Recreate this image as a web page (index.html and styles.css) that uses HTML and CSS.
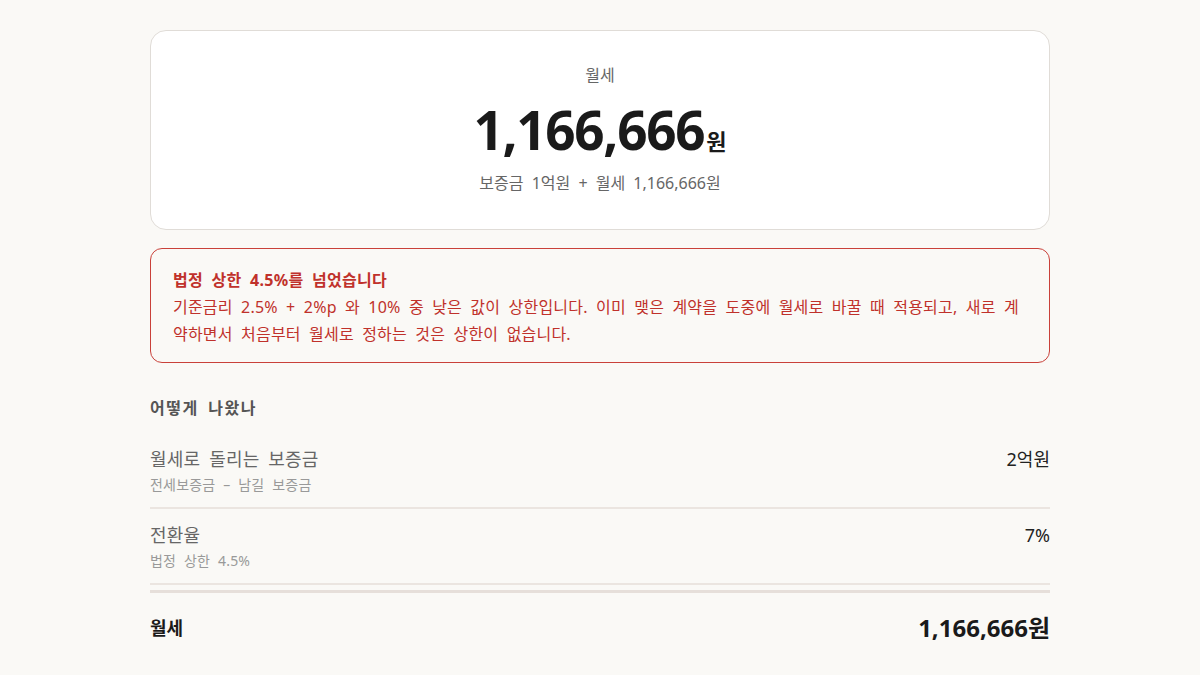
FILE: index.html
```html
<!DOCTYPE html>
<html lang="ko">
<head>
<meta charset="utf-8">
<link rel="stylesheet" href="styles.css">
</head>
<body>
<main class="wrap">
  <section class="result">
    <div class="result-label">월세</div>
    <div class="result-value"><span class="num">1,166,666</span><span class="unit">원</span></div>
    <div class="result-sub">보증금 1억원 + 월세 1,166,666원</div>
  </section>

  <section class="alert">
    <div class="alert-title">법정 상한 4.5%를 넘었습니다</div>
    <p class="alert-body">기준금리 2.5% + 2%p 와 10% 중 낮은 값이 상한입니다. 이미 맺은 계약을 도중에 월세로 바꿀 때 적용되고, 새로 계약하면서 처음부터 월세로 정하는 것은 상한이 없습니다.</p>
  </section>

  <section class="how">
    <h2 class="how-title">어떻게 나왔나</h2>
    <div class="row">
      <div class="row-left">
        <div class="row-label">월세로 돌리는 보증금</div>
        <div class="row-sub">전세보증금 – 남길 보증금</div>
      </div>
      <div class="row-value">2억원</div>
    </div>
    <div class="row">
      <div class="row-left">
        <div class="row-label">전환율</div>
        <div class="row-sub">법정 상한 4.5%</div>
      </div>
      <div class="row-value">7%</div>
    </div>
    <div class="total">
      <div class="total-label">월세</div>
      <div class="total-value">1,166,666원</div>
    </div>
  </section>
</main>
</body>
</html>
```

FILE: styles.css
```css
* { box-sizing: border-box; }
html, body { margin: 0; padding: 0; }
body {
  background: #faf9f6;
  font-family: "Noto Sans", "Noto Sans CJK KR", sans-serif;
  color: #222;
  word-spacing: 4px;
}
.wrap {
  width: 900px;
  margin: 0 auto;
  padding-top: 30px;
}
.result {
  background: #fff;
  border: 1px solid #e0dcd7;
  border-radius: 16px;
  height: 200px;
  padding-top: 32px;
  display: flex;
  flex-direction: column;
  align-items: center;
}
.result-label {
  font-size: 16px;
  line-height: 24px;
  color: #666;
}
.result-value {
  display: flex;
  align-items: baseline;
  justify-content: center;
  margin-top: 13px;
  height: 60px;
  color: #1a1a1a;
  font-weight: 700;
}
.result-value .num {
  font-size: 53px;
  line-height: 60px;
  letter-spacing: -1.3px;
}
.result-value .unit {
  font-size: 22px;
  line-height: 1;
  margin-left: 2px;
}
.result-sub {
  margin-top: 11px;
  font-size: 16px;
  line-height: 24px;
  color: #666;
}
.alert {
  margin-top: 18px;
  border: 1.5px solid #c9413a;
  border-radius: 12px;
  padding: 18px 22px 14px 22px;
  color: #c0312b;
}
.alert-title {
  font-size: 16px;
  font-weight: 700;
  line-height: 26px;
  letter-spacing: 0.3px;
}
.alert-body {
  margin: 1px 0 0 0;
  font-size: 16px;
  line-height: 27px;
  letter-spacing: 0.2px;
}
.how {
  margin-top: 32px;
}
.how-title {
  margin: 0;
  font-size: 16px;
  font-weight: 700;
  line-height: 26px;
  color: #555;
  letter-spacing: 1.5px;
}
.row {
  display: flex;
  justify-content: space-between;
  align-items: flex-start;
  padding: 13px 0 11px;
  border-bottom: 2px solid #ebe5e0;
}
.row:first-of-type { margin-top: 12px; }
.row-label {
  font-size: 18px;
  line-height: 26px;
  color: #666;
  letter-spacing: 0.2px;
}
.row-sub {
  font-size: 14px;
  line-height: 22px;
  color: #999;
  margin-top: 2px;
  letter-spacing: 0.2px;
}
.row-value {
  font-size: 18px;
  line-height: 26px;
  color: #222;
}
.total {
  display: flex;
  justify-content: space-between;
  align-items: center;
  margin-top: 5px;
  border-top: 3px solid #e6dfda;
  padding: 16px 0 16px;
}
.total-label {
  font-size: 18px;
  font-weight: 700;
  color: #1a1a1a;
}
.total-value {
  font-size: 24px;
  font-weight: 700;
  color: #1a1a1a;
}
```
